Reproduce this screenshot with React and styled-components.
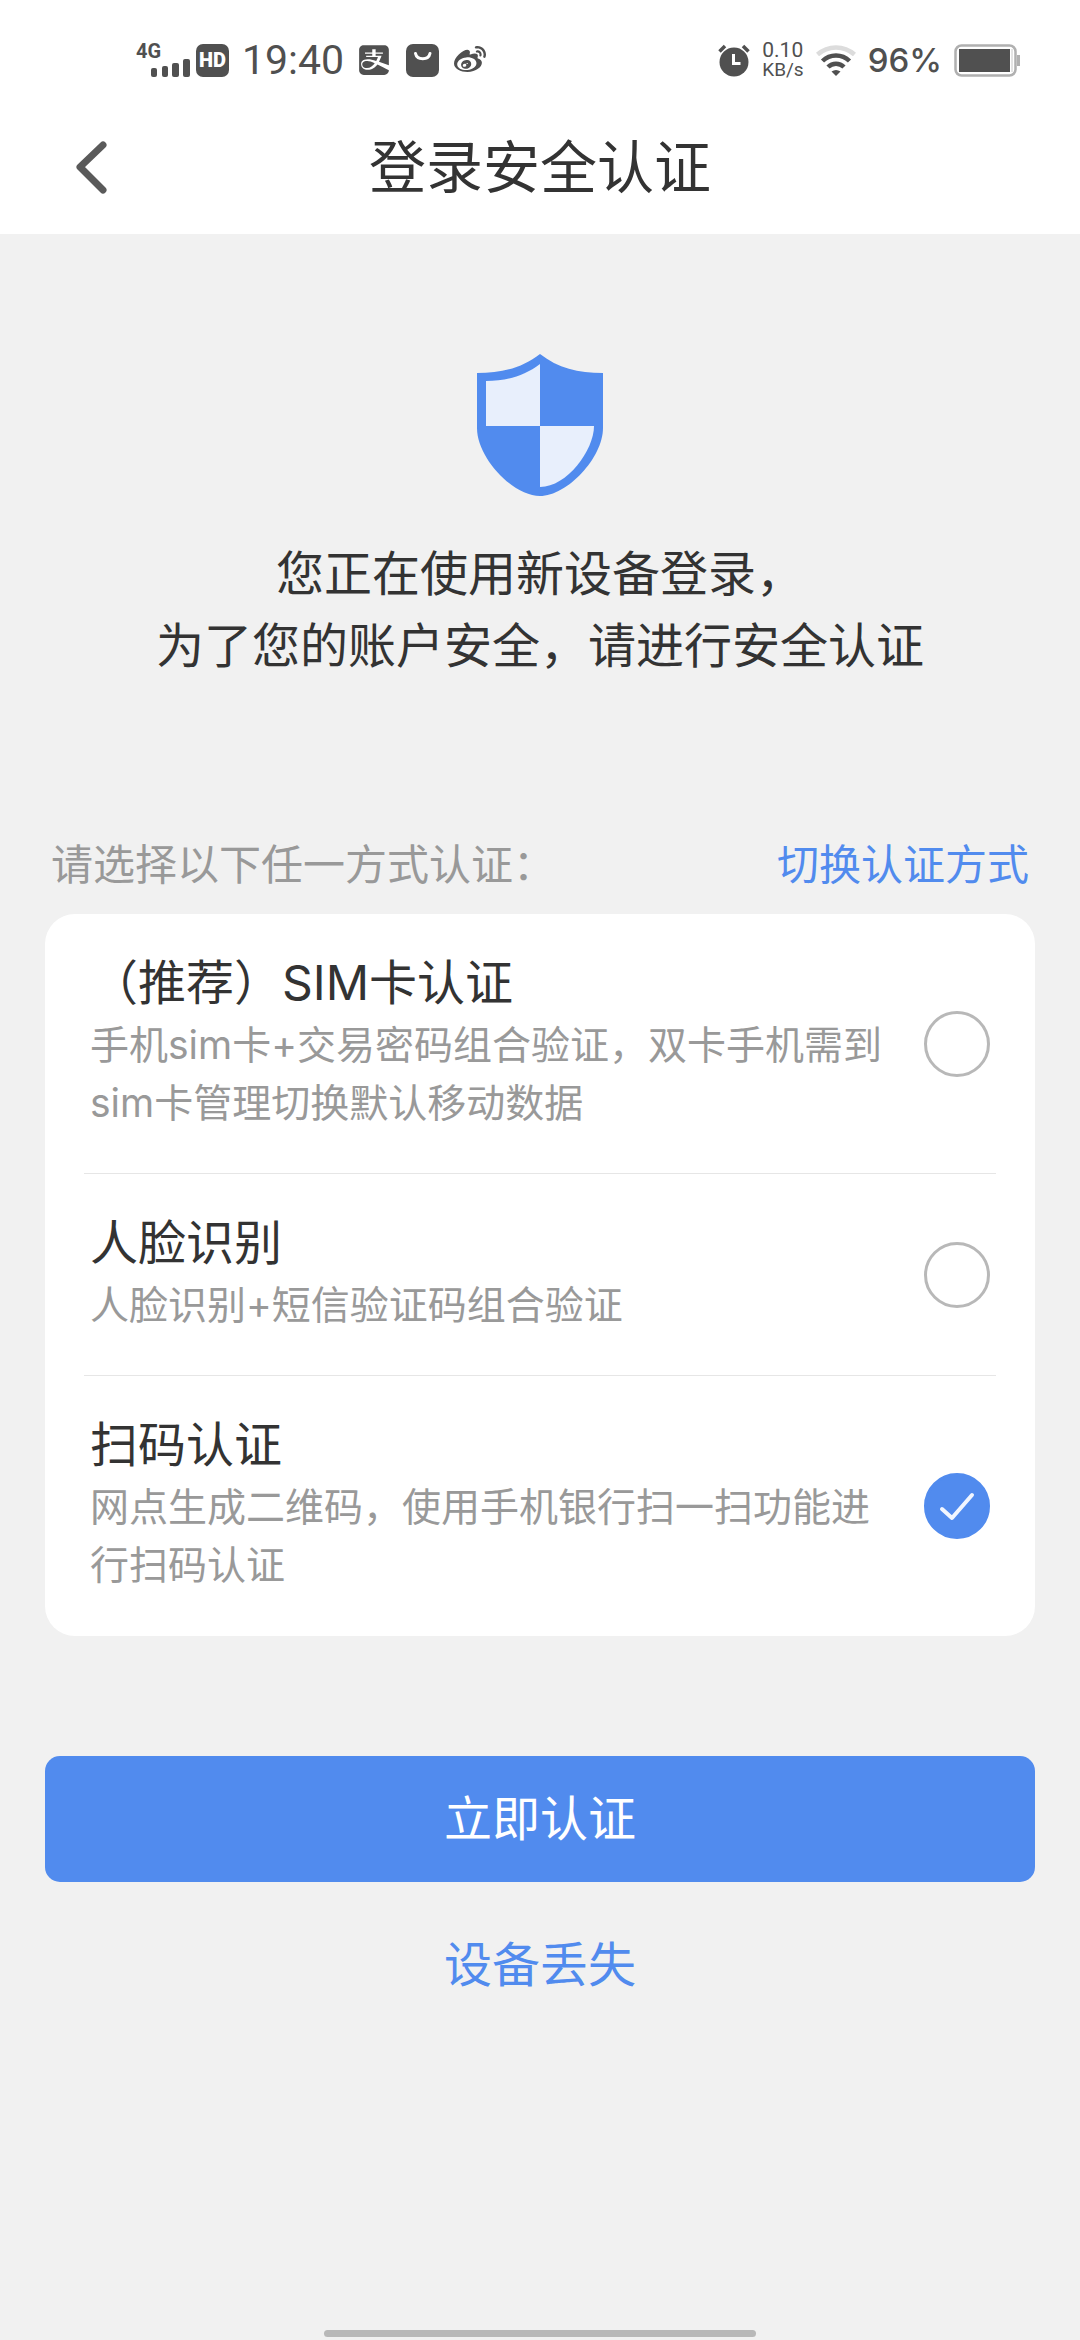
import React, { useState } from 'react';
import styled, { createGlobalStyle } from 'styled-components';
import { FaAlipay, FaWeibo } from 'react-icons/fa';

const GlobalStyle = createGlobalStyle`
    * {
        box-sizing: border-box;
    }
    body {
        margin: 0;
        background: #f1f1f1;
        color: #333;
        font-family: Inter, "Noto Sans CJK SC", sans-serif;
    }
    h1, h2, p, fieldset {
        margin: 0;
        padding: 0;
        border: 0;
        font-weight: 400;
    }
    button {
        padding: 0;
        border: 0;
        background: none;
        font: inherit;
        cursor: pointer;
    }
    svg {
        display: block;
        flex: none;
    }
`;

const Page = styled.div`
    display: flex;
    flex-direction: column;
    min-height: 100vh;
`;

/* Status bar */
const StatusBar = styled.div`
    display: flex;
    align-items: center;
    justify-content: space-between;
    height: 102px;
    padding: 18px 60px 0 136px;
    background: #fff;
    color: #505050;
    font-family: Roboto, sans-serif;
`;

const StatusGroup = styled.div`
    display: flex;
    align-items: center;
    gap: ${({ $gap }) => $gap}px;
`;

const Signal = styled.div`
    display: flex;
    flex-direction: column;
    width: 54px;
`;

const NetworkType = styled.span`
    font-size: 20px;
    line-height: 16px;
    font-weight: 700;
`;

const SignalBars = styled.svg`
    align-self: flex-end;
`;

const HdBadge = styled.span`
    width: 33px;
    height: 33px;
    border-radius: 7px;
    background: #505050;
    color: #fff;
    font-size: 20px;
    line-height: 33px;
    font-weight: 900;
    text-align: center;
`;

const Clock = styled.time`
    font-size: 41px;
    line-height: 48px;
    padding: 0 7px;
`;

const NetSpeed = styled.div`
    display: flex;
    flex-direction: column;
    font-size: 19px;
    line-height: 20px;
`;

const SpeedValue = styled.span`
    font-size: 21px;
`;

const BatteryLevel = styled.span`
    font-family: Inter, sans-serif;
    font-size: 33px;
    line-height: 40px;
    font-weight: 500;
`;

/* Title bar */
const Header = styled.header`
    display: grid;
    grid-template-columns: 132px 1fr 132px;
    align-items: center;
    height: 132px;
    background: #fff;
`;

const BackButton = styled.button`
    display: flex;
    align-items: center;
    height: 132px;
    padding-left: 74px;
`;

const Title = styled.h1`
    font-size: 57px;
    line-height: 72px;
    text-align: center;
`;

/* Content */
const Main = styled.main`
    display: flex;
    flex-direction: column;
    padding: 120px 45px 60px;
`;

const Intro = styled.section`
    display: flex;
    flex-direction: column;
    align-items: center;
    gap: 42px;
    margin-bottom: 152px;
`;

const IntroText = styled.p`
    font-size: 48px;
    line-height: 72px;
    text-align: center;
`;

const Prompt = styled.div`
    display: flex;
    justify-content: space-between;
    padding: 0 6px;
    margin-bottom: 18px;
    font-size: 42px;
    line-height: 62px;
    color: #999;
`;

const TextButton = styled.button`
    color: #518bee;
`;

const Card = styled.fieldset`
    min-width: 0;
    padding: 0 39px;
    border-radius: 30px;
    background: #fff;
`;

const Option = styled.label`
    display: flex;
    align-items: center;
    justify-content: space-between;
    gap: 24px;
    padding: 0 6px;
    border-bottom: 1px solid #e6e6e6;
    cursor: pointer;
    &:last-child {
        border-color: transparent;
    }
`;

const OptionBody = styled.div`
    padding: 36px 0 41px;
`;

const OptionTitle = styled.h2`
    font-size: 48px;
    line-height: 66px;
`;

const OptionText = styled.p`
    font-size: 39px;
    line-height: 58px;
    color: #999;
`;

const RadioBox = styled.span`
    display: grid;
    flex: none;
    place-items: center;
    > * {
        grid-area: 1 / 1;
    }
    svg {
        pointer-events: none;
    }
`;

const Radio = styled.input`
    appearance: none;
    width: 66px;
    height: 66px;
    margin: 0;
    border: 3px solid #b8b8b8;
    border-radius: 50%;
    &:checked {
        border-color: #518bee;
        background: #518bee;
    }
`;

const SubmitButton = styled.button`
    height: 126px;
    margin-top: 120px;
    border-radius: 15px;
    background: #518bee;
    color: #fff;
    font-size: 48px;
    line-height: 60px;
`;

const LostButton = styled(TextButton)`
    align-self: center;
    margin-top: 53px;
    font-size: 48px;
    line-height: 60px;
`;

const HomeBar = styled.div`
    width: 40%;
    height: 7px;
    margin: auto auto 3px;
    border-radius: 4px;
    background: #b8b8b8;
`;

const BagIcon = () => (
    <svg width="33" height="33" viewBox="0 0 33 33">
        <rect width="33" height="33" rx="7" fill="#505050" />
        <path d="M9.500 9.500c1.500 7 13 7 14.500 0" fill="none" stroke="#fff" strokeWidth="3" strokeLinecap="round" />
    </svg>
);

const AlarmIcon = () => (
    <svg width="32" height="33" viewBox="0 0 32 33">
        <circle cx="16" cy="18" r="14.500" fill="#505050" />
        <path d="M1.500 7.500L7 2M30.500 7.500L25 2" stroke="#505050" strokeWidth="3.500" />
        <path d="M15.500 10v9.500h7" fill="none" stroke="#fff" strokeWidth="3" />
    </svg>
);

const WifiIcon = () => (
    <svg width="40" height="32" viewBox="0 0 40 32" fill="none" strokeWidth="4.500">
        <path d="M1.500 10.500C12 1 28 1 38.500 10.500" stroke="#dcdcdc" />
        <path d="M6.500 17C14 9.500 26 9.500 33.500 17" stroke="#505050" />
        <path d="M12 23c4.500-4.500 11.500-4.500 16 0" stroke="#505050" />
        <path d="M15.500 27.500c3-2 6-2 9 0L20 32z" fill="#505050" />
    </svg>
);

const BatteryIcon = () => (
    <svg width="66" height="33" viewBox="0 0 66 33">
        <rect x="1.500" y="1.500" width="60" height="30" rx="6" fill="#fff" stroke="#b0b0b0" strokeWidth="2.500" />
        <rect x="5" y="5" width="51" height="23" fill="#505050" />
        <path d="M58 5v23" stroke="#c8c8c8" strokeWidth="1" />
        <rect x="63" y="11" width="3" height="11" fill="#b0b0b0" />
    </svg>
);

const ShieldIcon = () => (
    <svg width="126" height="142" viewBox="0 0 126 142">
        <path d="M63 0C45 14 25 19 0 19v55c0 30 36 68 63 68s63-38 63-68V19C101 19 81 14 63 0z" fill="#518bee" />
        <path d="M63 10C47 22 30 27 9 27v45h54z" fill="#e8effc" />
        <path d="M63 72h54c0 24-27 61-54 61z" fill="#e8effc" />
    </svg>
);

const options = [
    { id: 'sim', title: '（推荐）SIM卡认证', text: '手机sim卡+交易密码组合验证，双卡手机需到sim卡管理切换默认移动数据' },
    { id: 'face', title: '人脸识别', text: '人脸识别+短信验证码组合验证' },
    { id: 'scan', title: '扫码认证', text: '网点生成二维码，使用手机银行扫一扫功能进行扫码认证' },
];

const App = () => {
    const [selected, setSelected] = useState('scan');

    return (
        <Page lang="zh-CN">
            <GlobalStyle />
            <StatusBar>
                <StatusGroup $gap={6}>
                    <Signal>
                        <NetworkType>4G</NetworkType>
                        <SignalBars width="39" height="18" viewBox="0 0 39 18" fill="#505050">
                            <rect x="0" y="9" width="6" height="9" rx="2" />
                            <rect x="11" y="7" width="6" height="11" rx="2" />
                            <rect x="21" y="4" width="7" height="14" rx="2" />
                            <rect x="32" y="0" width="7" height="18" rx="2" />
                        </SignalBars>
                    </Signal>
                    <HdBadge>HD</HdBadge>
                    <Clock>19:40</Clock>
                    <StatusGroup $gap={15}>
                        <FaAlipay size={34} />
                        <BagIcon />
                        <FaWeibo size={32} />
                    </StatusGroup>
                </StatusGroup>
                <StatusGroup $gap={12}>
                    <AlarmIcon />
                    <NetSpeed>
                        <SpeedValue>0.10</SpeedValue>
                        <span>KB/s</span>
                    </NetSpeed>
                    <WifiIcon />
                    <StatusGroup $gap={12}>
                        <BatteryLevel>96%</BatteryLevel>
                        <BatteryIcon />
                    </StatusGroup>
                </StatusGroup>
            </StatusBar>

            <Header>
                <BackButton aria-label="返回">
                    <svg width="34" height="54" viewBox="0 0 34 54">
                        <path d="M29 4L6 26l23 23" fill="none" stroke="#5a5a5a" strokeWidth="7" strokeLinecap="round" strokeLinejoin="round" />
                    </svg>
                </BackButton>
                <Title>登录安全认证</Title>
            </Header>

            <Main>
                <Intro>
                    <ShieldIcon />
                    <IntroText>
                        您正在使用新设备登录，<br />
                        为了您的账户安全，请进行安全认证
                    </IntroText>
                </Intro>

                <Prompt>
                    <span>请选择以下任一方式认证：</span>
                    <TextButton>切换认证方式</TextButton>
                </Prompt>

                {/* Auth methods */}
                <Card aria-label="认证方式">
                    {options.map((item) => (
                        <Option key={item.id} htmlFor={item.id}>
                            <OptionBody>
                                <OptionTitle>{item.title}</OptionTitle>
                                <OptionText>{item.text}</OptionText>
                            </OptionBody>
                            <RadioBox>
                                <Radio
                                    type="radio"
                                    name="method"
                                    id={item.id}
                                    checked={selected === item.id}
                                    onChange={() => setSelected(item.id)}
                                />
                                {selected === item.id && (
                                    <svg width="66" height="66" viewBox="0 0 66 66">
                                        <path d="M18 36l10 9 20-23" fill="none" stroke="#f1f6ff" strokeWidth="4" strokeLinecap="round" strokeLinejoin="round" />
                                    </svg>
                                )}
                            </RadioBox>
                        </Option>
                    ))}
                </Card>

                <SubmitButton>立即认证</SubmitButton>
                <LostButton>设备丢失</LostButton>
            </Main>
            <HomeBar />
        </Page>
    );
};

export default App;
